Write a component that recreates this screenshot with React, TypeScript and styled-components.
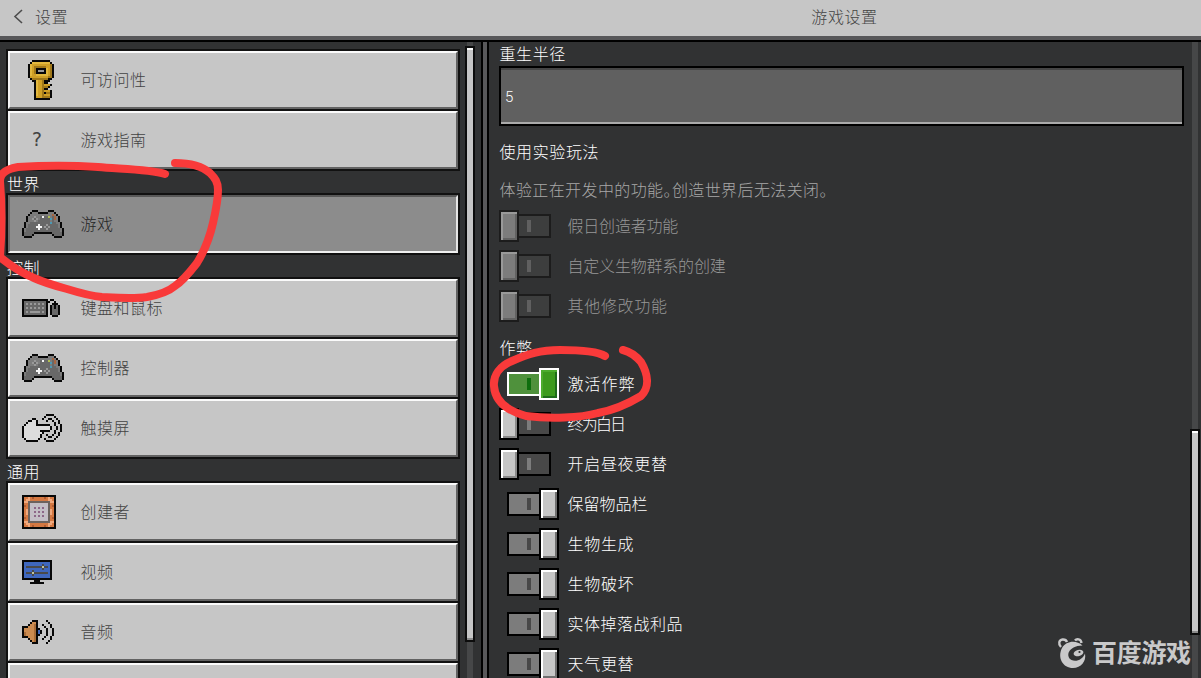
import React from 'react';
import styled, { createGlobalStyle } from 'styled-components';

const GlobalStyle = createGlobalStyle`
  * { box-sizing: border-box; }
  html, body { margin: 0; padding: 0; background: #313233; overflow: hidden; }
  body { font-family: "Noto Sans CJK SC", sans-serif; font-weight: 300; font-size: 16px; }
`;

const Screen = styled.div`
  position: relative;
  width: 1201px;
  height: 678px;
  display: flex;
  flex-direction: column;
  overflow: hidden;
  background: #313233;
`;

const Header = styled.header`
  flex: none;
  height: 42px;
  display: flex;
  background: #c6c6c6;
  border-bottom: 2px solid #000;
  box-shadow: inset 0 -4px 0 #58585a;
  color: #444;
  line-height: 32px;
`;

const BackTitle = styled.div`
  width: 487px;
  display: flex;
  align-items: flex-start;
  gap: 12px;
  padding-left: 13px;
  letter-spacing: 0.5px;
  svg { margin-top: 9px; }
`;

const PageTitle = styled.div`
  flex: 1;
  text-align: center;
  letter-spacing: 0.6px;
  padding-left: 1px;
`;

const Body = styled.div`
  flex: 1;
  min-height: 0;
  display: flex;
`;

const Sidebar = styled.nav`
  width: 481px;
  display: flex;
  padding-left: 6px;
`;

const MenuList = styled.div`
  width: 454px;
  padding-top: 7px;
  flex: none;
`;

const MenuGroup = styled.div`
  display: flex;
  flex-direction: column;
  gap: 2px;
  padding: 2px;
  background: #111;
`;

const GroupTitle = styled.div`
  height: 22px;
  line-height: 25px;
  padding-left: 1px;
  color: #fff;
  letter-spacing: 0.5px;
`;

const MenuButton = styled.div<{ $active?: boolean }>`
  flex: none;
  height: 58px;
  display: flex;
  align-items: center;
  padding-left: 12px;
  border: 2px solid;
  border-color: ${p => (p.$active ? '#585858 #e4e4e4 #f0f0f0 #6a6a6a' : '#fafafa #626262 #626262 #f4f4f4')};
  background: ${p => (p.$active ? '#8c8c8c' : '#c6c6c6')};
  color: ${p => (p.$active ? '#242424' : '#434343')};
`;

const IconSlot = styled.div<{ $inset?: number }>`
  width: 58px;
  padding-left: ${p => p.$inset ?? 0}px;
  display: flex;
  align-items: center;
  svg { display: block; }
`;

const QuestionMark = styled.span`
  font-family: "DejaVu Sans Mono", monospace;
  font-size: 19px;
  padding-bottom: 2px;
`;

const MenuLabel = styled.span`
  letter-spacing: 0.5px;
  padding: 0 0 2px 0.5px;
`;

const Scroll = styled.div<{ $left: number }>`
  width: 10px;
  margin-left: ${p => p.$left}px;
  flex: none;
  display: flex;
  flex-direction: column;
  align-items: center;
`;

const Track = styled.div<{ $h?: number }>`
  width: 6px;
  background: #464748;
  ${p => (p.$h ? `height: ${p.$h}px; flex: none;` : 'flex: 1;')}
`;

const Thumb = styled.div<{ $h: number }>`
  flex: none;
  width: 10px;
  height: ${p => p.$h}px;
  border: 2px solid #0c0c0c;
  background: #c6c6c6;
  box-shadow: inset 0 2px 0 #fff, inset 0 -2px 0 #8a8a8a;
`;

const Divider = styled.div`
  width: 8px;
  flex: none;
  background: #58585a;
  border: solid #000;
  border-width: 0 2px;
`;

const Content = styled.main`
  width: 695px;
  flex: none;
  padding-left: 10px;
  color: #fff;
`;

const Caption = styled.div<{ $h: number; $top?: number; $color?: string; $spacing?: number }>`
  height: ${p => p.$h}px;
  line-height: 22px;
  padding: ${p => p.$top ?? 0}px 0 0 0.5px;
  letter-spacing: ${p => p.$spacing ?? 0.6}px;
  color: ${p => p.$color ?? '#fff'};
  font-feature-settings: "halt";
`;

const TextField = styled.div`
  height: 60px;
  border: 2px solid #000;
  background: #606060;
  box-shadow: inset 0 2px 0 #454545, inset 0 -2px 0 #ababab;
  padding-left: 4px;
  line-height: 58px;
  font-family: Roboto, sans-serif;
  font-size: 15px;
`;

const ToggleRow = styled.div<{ $disabled?: boolean }>`
  height: 40px;
  display: flex;
  align-items: center;
  color: ${p => (p.$disabled ? '#979797' : '#fff')};
`;

type ToggleState = 'off' | 'on' | 'disabled' | 'active';

const ToggleBox = styled.div<{ $on: boolean }>`
  width: 60px;
  margin-right: 8px;
  padding-left: ${p => (p.$on ? 8 : 0)}px;
  display: flex;
  flex-direction: ${p => (p.$on ? 'row' : 'row-reverse')};
  justify-content: ${p => (p.$on ? 'flex-start' : 'flex-end')};
  align-items: center;
`;

const trackFill = { off: '#484848', on: '#7c7c7c', disabled: '#3d3e3e', active: '#4f913c' };
const markFill = { off: '#7c7c7c', on: '#484848', disabled: '#606060', active: '#0e6e0e' };
const edge = { off: '#000', on: '#000', disabled: '#1c1c1c', active: '#fff' };
const knobFill = { off: '#c6c6c6', on: '#c6c6c6', disabled: '#7c7c7c', active: '#3c9a1d' };
const knobLight = { off: '#fff', on: '#fff', disabled: '#999', active: '#4cac2d' };
const knobDark = { off: '#8a8a8a', on: '#707070', disabled: '#626262', active: '#1e6b1a' };

const ToggleTrack = styled.div<{ $s: ToggleState; $on: boolean }>`
  width: 34px;
  height: 24px;
  border: 2px solid ${p => edge[p.$s]};
  background: ${p => trackFill[p.$s]};
  margin: ${p => (p.$on ? '0 -2px 0 0' : '0 0 0 -2px')};
  padding: 4px 0 0 ${p => (p.$on ? 18 : 8)}px;
  &::before {
    content: "";
    display: block;
    width: 4px;
    height: 12px;
    background: ${p => markFill[p.$s]};
  }
`;

const Knob = styled.div<{ $s: ToggleState }>`
  position: relative;
  width: 20px;
  height: 32px;
  border: 2px solid ${p => edge[p.$s]};
  background: ${p => knobFill[p.$s]};
  box-shadow: inset 2px 2px 0 ${p => knobLight[p.$s]}, inset -2px -2px 0 ${p => knobDark[p.$s]};
`;

const ToggleLabel = styled.span<{ $spacing: number }>`
  letter-spacing: ${p => p.$spacing}px;
  padding: 0 0 2px 0.5px;
`;

function Toggle({ state, text, spacing = 0.7 }: { state: ToggleState; text: string; spacing?: number }) {
  const on = state === 'on' || state === 'active';
  return (
    <ToggleRow $disabled={state === 'disabled'}>
      <ToggleBox $on={on}>
        <ToggleTrack $s={state} $on={on} />
        <Knob $s={state} />
      </ToggleBox>
      <ToggleLabel $spacing={spacing}>{text}</ToggleLabel>
    </ToggleRow>
  );
}

const palette: Record<string, string> = {
  K: '#080808', Y: '#d0a026', y: '#e2b83e', d: '#a0781a', W: '#f4f4f4',
  G: '#686868', g: '#7c7c7c', L: '#999', D: '#4a4a4a', H: '#dcdcdc',
  B: '#4c9ab5', R: '#a8653f', E: '#b0bd50', O: '#d47842', o: '#f0a87c',
  Q: '#b05c32', S: '#6c625e', P: '#c4bec6', p: '#8d6688', U: '#3f67bd',
  u: '#263f79', T: '#cb8b50', t: '#a76c38', C: '#bfc6a0',
};

function PixelArt({ rows }: { rows: string[] }) {
  const w = Math.max(...rows.map(r => r.length));
  return (
    <svg width={w * 2} height={rows.length * 2} viewBox={`0 0 ${w} ${rows.length}`} shapeRendering="crispEdges">
      {rows.flatMap((row, y) =>
        [...row].map((c, x) => (c === '.' ? null : <rect key={`${x}-${y}`} x={x} y={y} width={1} height={1} fill={palette[c]} />)),
      )}
    </svg>
  );
}

const keyArt = [
  '..KKKKKKKKK..',
  '.KyyyyyyyyyK.',
  'KyYYYYYYYYYdK',
  'KyYddddddYYdK',
  'KyYdKKKKKyYdK',
  'KyYdKLLLKyYdK',
  'KyYdKKKKKyYdK',
  'KyYYyyyyyyYdK',
  'KYYYYYYYYYddK',
  '.KddddddddKK.',
  '..KKyYYdKKK..',
  '...KyYYdKK...',
  '...KyYYdYYYK.',
  '...KyYYdddK..',
  '...KyYYdKK...',
  '...KyYYdYYYK.',
  '...KyYYdKddK.',
  '...KyYYdYYYK.',
  '...KYYYddddK.',
  '...KKKKKKKK..',
];

const padArt = [
  '.....KKK.....KKK.....',
  '....KgggKKKKKgggK....',
  '...KgggggggggggRgK...',
  '..KgggLggGWGGEgGRgK..',
  '..KggLGLgGGGGGBGRgK..',
  '..KgggLgGGGGGGgGggK..',
  '.KggGGGGGGGGGGBGGggK.',
  '.KgGGGGGWGGGLGGGGGgK.',
  '.KgGGGGWWWGLGLGGGGgK.',
  'KgGGGGGGWGGGLGGGGGGgK',
  'KgGGGGGGGGGGGGGGGGGgK',
  'KGGGGGKKKKKKKKKGGGGGK',
  'KGGGGK.........KGGGGK',
  '.KKKK...........KKKK.',
];

const keyboardArt = [
  'KKKKKKKKKKKKK.KK...',
  'KGGGGGGGGGGGKK..K..',
  'KGLGLGLGLGLGK..KKK.',
  'KGGGGGGGGGGGK.KGKGK',
  'KGLGLGLGLGLGK.KGKGK',
  'KGGGGGGGGGGGK.KGGGK',
  'KGLGLLLLLGLGK.KGGGK',
  'KGGGGGGGGGGGK.KGGGK',
  'KKKKKKKKKKKKK..KKK.',
];

const touchArt = [
  '............KKKK....',
  '...........K....K...',
  '.....KK...K..KK..K..',
  '...KKHHK....K..K..K.',
  '..KHHHHK........K.K.',
  '.KHHHHHKKKKKKK..K..K',
  'KHHHHHHHHHHHHHK..K.K',
  'KHHHHHHHHHHHHHK..K.K',
  'KHHHHHHHHKKKKK..K..K',
  'KHHHHHHHHHK.....K.K.',
  'KHHHHHHHHK..K..K..K.',
  'KHHHHHHHHK...KK..K..',
  '.KHHHHHHK..K....K...',
  '..KKKKKK....KKKK....',
];

const blockArt = [
  'KKKKKKKKKKKKKKKKK',
  'KOOoOQOOOOOQOoOOK',
  'KOooOOOOOOOOOooOK',
  'KooSSSSSSSSSSSooK',
  'KOOSPPPPPPPPPSOOK',
  'KQOSPPPPPPPPPSOQK',
  'KOOSPPpPpPpPPSOOK',
  'KOoSPPPPPPPPPSoOK',
  'KOoSPPpPpPpPPSoOK',
  'KOoSPPPPPPPPPSoOK',
  'KOOSPPpPpPpPPSOOK',
  'KQOSPPPPPPPPPSOQK',
  'KOOSPPPPPPPPPSOOK',
  'KooSSSSSSSSSSSooK',
  'KOooOOOOOOOOOooOK',
  'KOOoOQOOOOOQOoOOK',
  'KKKKKKKKKKKKKKKKK',
];

const videoArt = [
  'KKKKKKKKKKKKKKK',
  'KUUUUUUUUUUUUUK',
  'KUUUUUUUUUDUUUK',
  'KUDDDDDDDDCDDUK',
  'KUUUUUUUUUDUUUK',
  'KUUUUDUUUUUUUUK',
  'KUDDDCDDDDDDDUK',
  'KUUUUDUUUUUUUUK',
  'KUUUUUUUUUUUUUK',
  'KKKKKKKKKKKKKKK',
  '......KKK......',
  '....KKKKKKK....',
];

const audioArt = [
  '.....KKK....K...',
  '....KTTK.....K..',
  '...KTTtK..K...K.',
  'KKKTTTtK...K..K.',
  'KTTTTTtKK...K..K',
  'KTTTTTtKUK..K..K',
  'KtTTTTtKUK..K..K',
  'KtTTTTtKK...K..K',
  'KKKTTTtK...K..K.',
  '...KTTtK..K...K.',
  '....KTtK.....K..',
  '.....KKK....K...',
];

const RedMarks = styled.svg`
  position: absolute;
  inset: 0;
  fill: none;
  stroke: #f93a3a;
  stroke-width: 8;
  stroke-linecap: round;
  stroke-linejoin: round;
`;

const Watermark = styled.div`
  position: absolute;
  left: 1057px;
  top: 634px;
  display: flex;
  align-items: center;
  gap: 4px;
  height: 36px;
  color: #c9c9ca;
  font-size: 25px;
  font-weight: 700;
  letter-spacing: -0.3px;
  white-space: nowrap;
  line-height: 36px;
  span { padding-bottom: 2px; }
`;

function BearLogo() {
  return (
    <svg width="31" height="34" viewBox="0 0 31 34" fill="none" stroke="currentColor">
      <path d="M4 12C1 9 2 5 5.500 4.500C8 4.300 9.500 5.500 10 7M18 5.500C19.500 3.500 24 3.500 24.500 8" strokeWidth="2.400" />
      <path d="M25.500 10.500C19 4.500 9 6 5 13C0 23 6 33 16 33C24 33 29.500 26.500 28 18.500C26 24 19.500 27.500 14.500 25C8.500 21.500 10.500 11 25.500 10.500Z" fill="currentColor" stroke="none" />
      <ellipse cx="21.500" cy="18" rx="5" ry="3" fill="currentColor" stroke="none" transform="rotate(-15 21.500 18)" />
      <circle cx="22.500" cy="17" r="1.100" fill="#313233" stroke="none" />
    </svg>
  );
}

function Item({ art, text, active, inset }: { art?: string[]; text: string; active?: boolean; inset?: number }) {
  return (
    <MenuButton $active={active}>
      <IconSlot $inset={inset}>{art ? <PixelArt rows={art} /> : <QuestionMark>?</QuestionMark>}</IconSlot>
      <MenuLabel>{text}</MenuLabel>
    </MenuButton>
  );
}

export default function App() {
  return (
    <>
      <GlobalStyle />
      <Screen>
        <Header>
          <BackTitle>
            <svg width="10" height="15" viewBox="0 0 10 15" fill="none" stroke="#4c4c4c" strokeWidth="1.6">
              <path d="M9 1L2 7.500L9 14" />
            </svg>
            设置
          </BackTitle>
          <PageTitle>游戏设置</PageTitle>
        </Header>
        <Body>
          <Sidebar>
            <MenuList>
              <MenuGroup>
                <Item art={keyArt} text="可访问性" inset={6} />
                <Item text="游戏指南" inset={9} />
              </MenuGroup>
              <GroupTitle>世界</GroupTitle>
              <MenuGroup>
                <Item art={padArt} text="游戏" active />
              </MenuGroup>
              <GroupTitle>控制</GroupTitle>
              <MenuGroup>
                <Item art={keyboardArt} text="键盘和鼠标" />
                <Item art={padArt} text="控制器" />
                <Item art={touchArt} text="触摸屏" />
              </MenuGroup>
              <GroupTitle>通用</GroupTitle>
              <MenuGroup>
                <Item art={blockArt} text="创建者" />
                <Item art={videoArt} text="视频" />
                <Item art={audioArt} text="音频" />
                <MenuButton />
              </MenuGroup>
            </MenuList>
            <Scroll $left={5}>
              <Track $h={4} />
              <Thumb $h={596} />
              <Track />
            </Scroll>
          </Sidebar>
          <Divider />
          <Content>
            <Caption $h={24}>重生半径</Caption>
            <TextField>5</TextField>
            <Caption $h={52} $top={14}>使用实验玩法</Caption>
            <Caption $h={28} $color="#a8a8a8" $spacing={0.4}>体验正在开发中的功能。创造世界后无法关闭。</Caption>
            <Toggle state="disabled" text="假日创造者功能" spacing={-0.2} />
            <Toggle state="disabled" text="自定义生物群系的创建" spacing={-0.2} />
            <Toggle state="disabled" text="其他修改功能" />
            <Caption $h={38} $top={10}>作弊</Caption>
            <Toggle state="active" text="激活作弊" spacing={1} />
            <Toggle state="off" text="终为白日" spacing={-1.8} />
            <Toggle state="off" text="开启昼夜更替" />
            <Toggle state="on" text="保留物品栏" spacing={0} />
            <Toggle state="on" text="生物生成" />
            <Toggle state="on" text="生物破坏" />
            <Toggle state="on" text="实体掉落战利品" spacing={0.5} />
            <Toggle state="on" text="天气更替" />
          </Content>
          <Scroll $left={6}>
            <Track $h={387} />
            <Thumb $h={206} />
            <Track />
          </Scroll>
        </Body>
        <RedMarks width="1201" height="678" viewBox="0 0 1201 678">
          <path d="M165 174C150 169 120 169 98 167C65 165 35 166 18 167C6 169 0 174 0 181C2 205 2 230 0 257C12 267 22 273 34 278C45 283 56 286 67 289C80 293 90 296 102 297C120 298 133 299 147 297C158 295 168 292 175 286C184 280 190 272 197 263C205 250 210 236 213 223C216 210 218 200 218 190C218 182 215 178 210 173C202 166 190 163 175 163" />
          <path d="M605 356C597 351 580 350 560 350C540 350 528 354 512 361C500 366 493 375 494 386C495 402 508 411 526 416C550 419 580 418 598 413C615 410 631 402 641 396C650 387 648 374 641 362C636 356 631 352 623 350" />
        </RedMarks>
        <Watermark>
          <BearLogo />
          <span>百度游戏</span>
        </Watermark>
      </Screen>
    </>
  );
}
